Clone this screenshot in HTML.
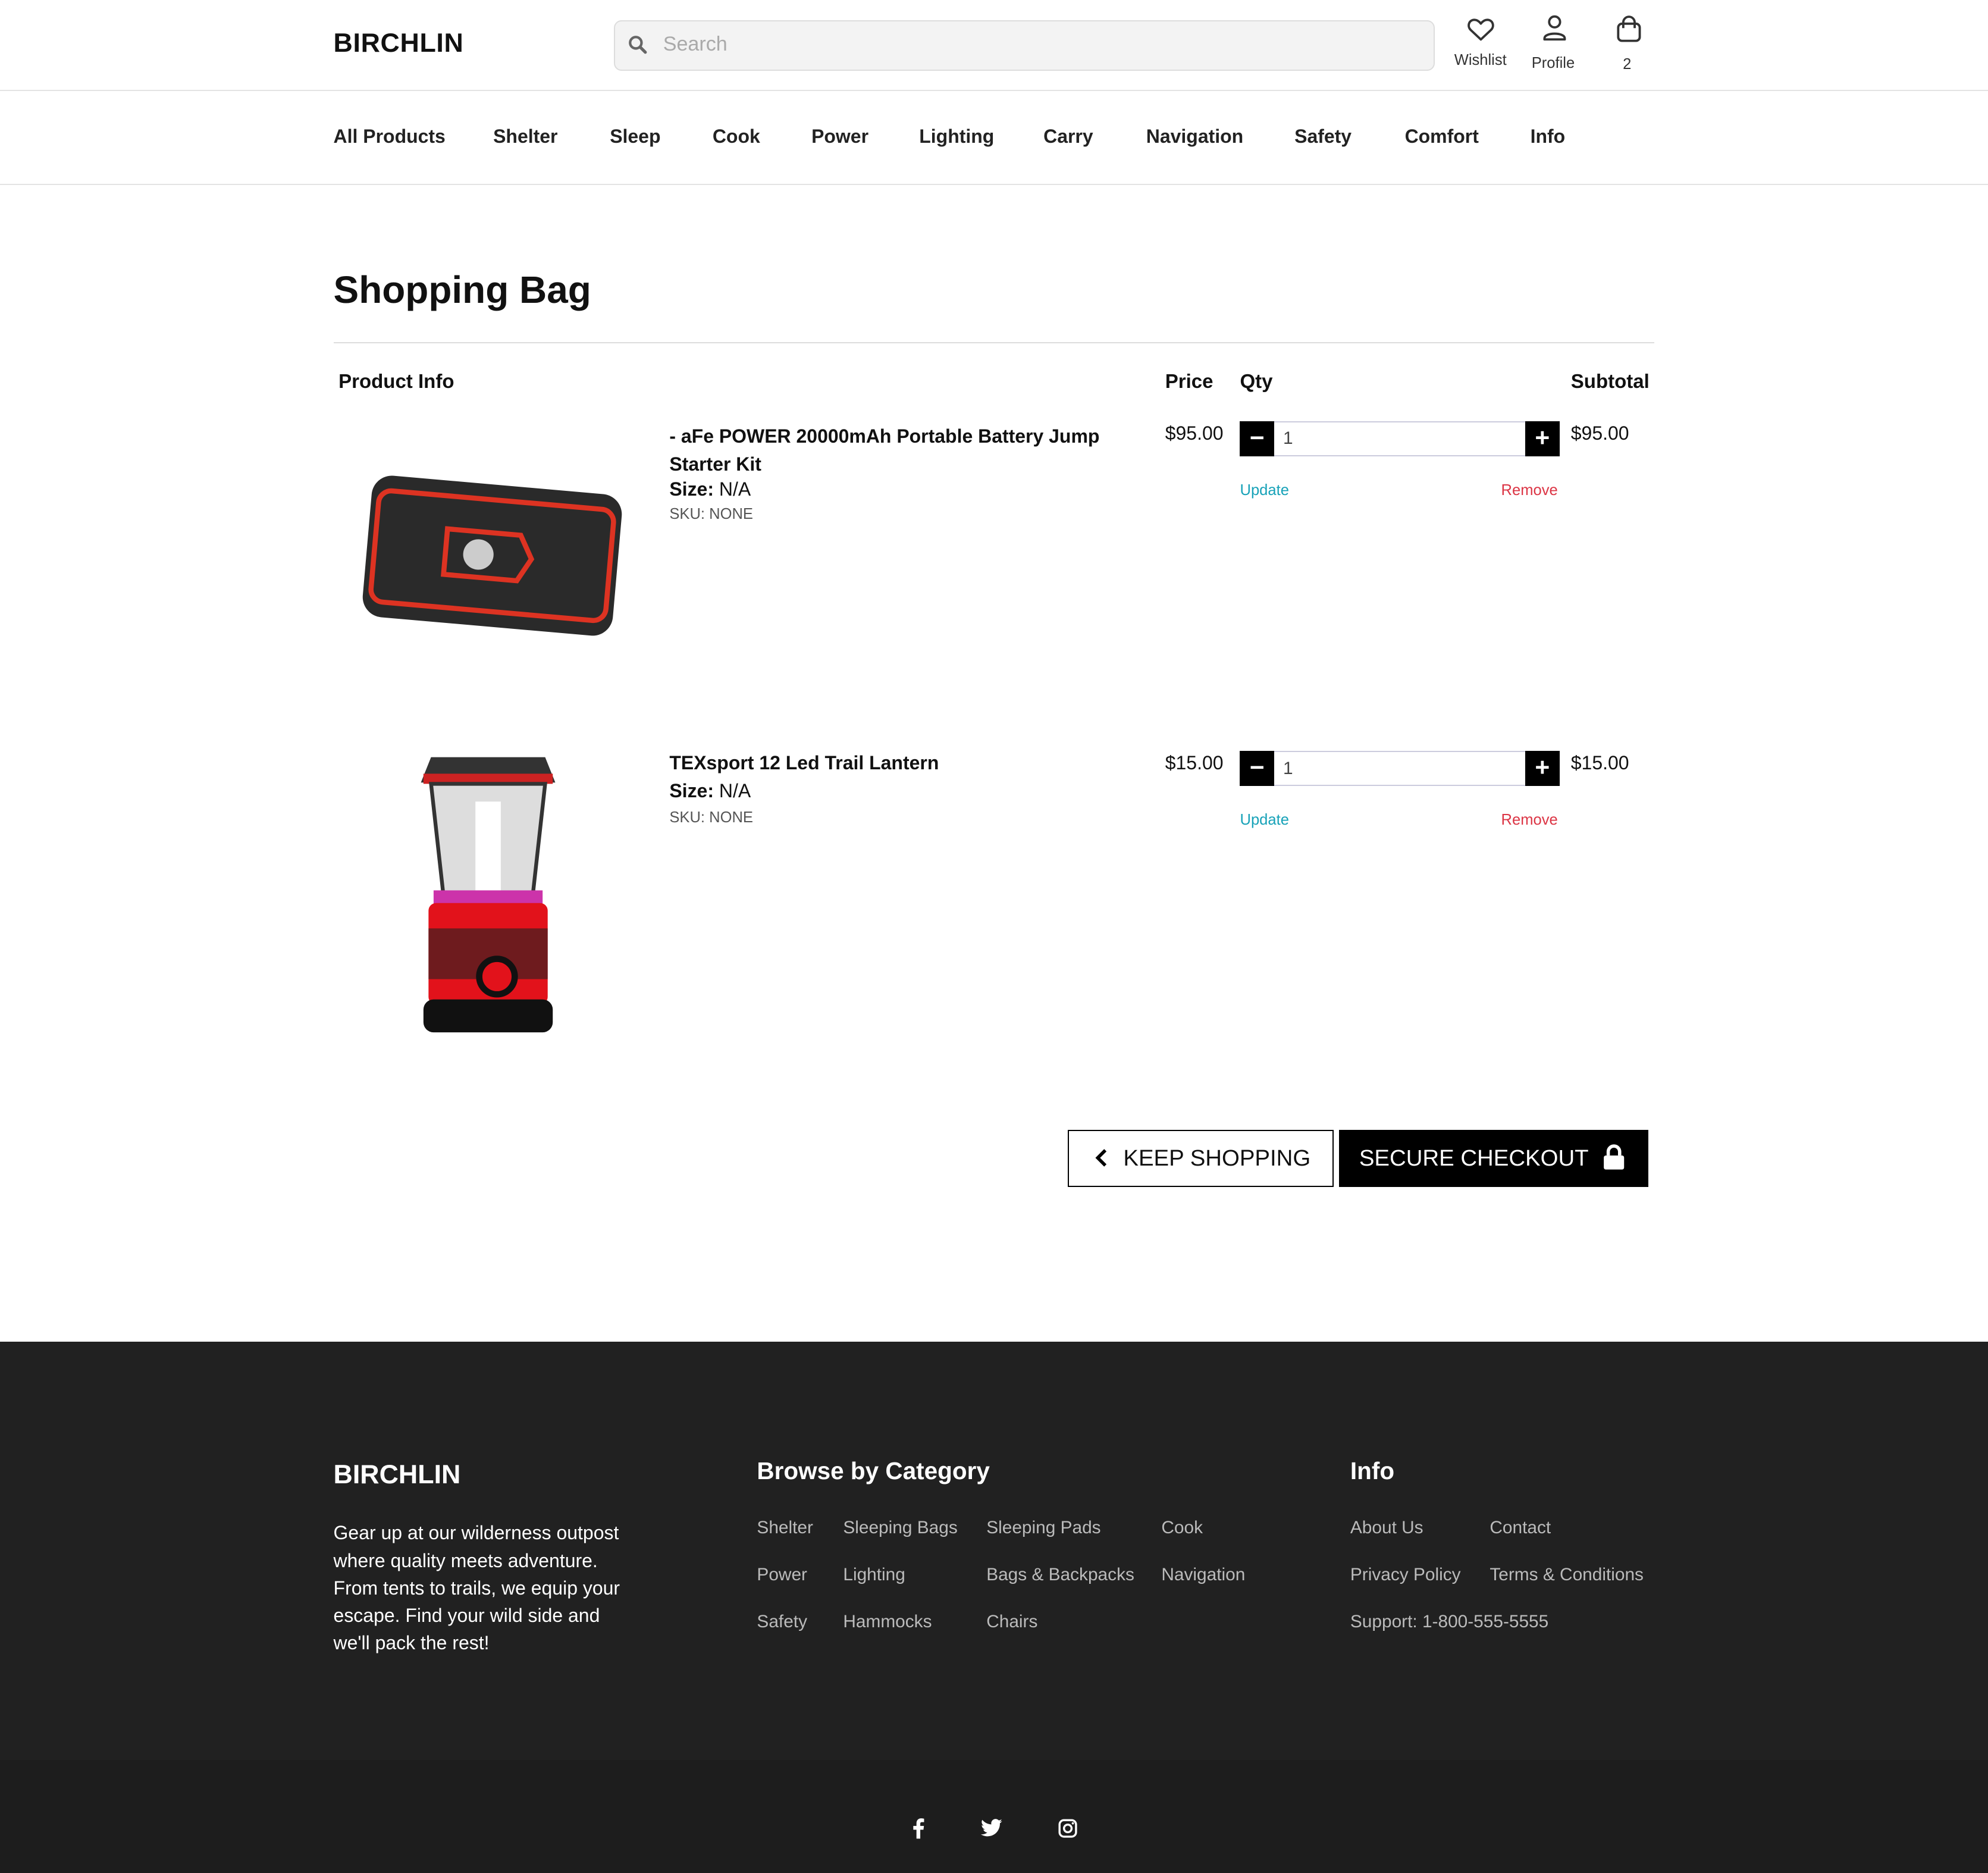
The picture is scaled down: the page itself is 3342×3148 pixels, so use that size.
<!DOCTYPE html>
<html><head><meta charset="utf-8"><style>
html,body{margin:0;padding:0;background:#fff}
body{width:1568px;height:1477px;zoom:2.13138;position:relative;overflow:hidden;font-family:"Liberation Sans",Arial,sans-serif;color:#111}
.a{position:absolute;white-space:nowrap}
.nav span{position:absolute;top:99px;font-size:15px;font-weight:bold;color:#222}
.ft{color:#bbb;font-size:14px}
.qb{position:absolute;width:27px;height:28px;background:#000;color:#fff;font-weight:bold;font-size:20px;text-align:center;line-height:27px}
</style></head><body>
<div class="a" style="left:263px;top:22px;font-size:21px;font-weight:bold;letter-spacing:.3px">BIRCHLIN</div>
<div class="a" style="left:484px;top:16px;width:646px;height:38px;background:#f3f3f3;border:1px solid #ddd;border-radius:6px"></div>
<svg class="a" style="left:495px;top:27px" width="16" height="16" viewBox="0 0 16 16"><circle cx="6.5" cy="6.5" r="4.5" fill="none" stroke="#666" stroke-width="2"/><path d="M10 10l4 4" stroke="#666" stroke-width="2.4" stroke-linecap="round"/></svg>
<div class="a" style="left:523px;top:26px;font-size:16px;color:#aaa">Search</div>
<svg class="a" style="left:1157px;top:13px" width="22" height="20" viewBox="0 0 22 20"><path d="M11 18L3 10.5C0 7.5 1.5 2.5 6 2.5c2.2 0 3.7 1.3 5 3 1.3-1.7 2.8-3 5-3 4.5 0 6 5 3 8z" fill="none" stroke="#333" stroke-width="1.8" stroke-linejoin="round"/></svg>
<div class="a" style="left:1147px;top:41px;font-size:12px;color:#333">Wishlist</div>
<svg class="a" style="left:1215px;top:11px" width="22" height="22" viewBox="0 0 22 22"><circle cx="11" cy="6.5" r="4.3" fill="none" stroke="#333" stroke-width="1.8"/><path d="M3 19.5c0-5 16-5 16 0v0.8H3z" fill="none" stroke="#333" stroke-width="1.8" stroke-linejoin="round"/></svg>
<div class="a" style="left:1208px;top:43px;font-size:12px;color:#333">Profile</div>
<svg class="a" style="left:1274px;top:12px" width="22" height="22" viewBox="0 0 22 22"><rect x="2.5" y="6.5" width="17" height="13.5" rx="3" fill="none" stroke="#333" stroke-width="1.8"/><path d="M6.5 10V5.5a4.5 4.5 0 0 1 9 0V10" fill="none" stroke="#333" stroke-width="1.8"/></svg>
<div class="a" style="left:1280px;top:44px;font-size:12px;color:#333">2</div>
<div class="a" style="left:0;top:71px;width:1568px;border-top:1px solid #e3e3e3"></div>
<div class="nav">
<span style="left:263px">All Products</span><span style="left:389px">Shelter</span><span style="left:481px">Sleep</span><span style="left:562px">Cook</span><span style="left:640px">Power</span><span style="left:725px">Lighting</span><span style="left:823px">Carry</span><span style="left:904px">Navigation</span><span style="left:1021px">Safety</span><span style="left:1108px">Comfort</span><span style="left:1207px">Info</span>
</div>
<div class="a" style="left:0;top:145px;width:1568px;border-top:1px solid #e3e3e3"></div>
<div class="a" style="left:263px;top:211px;font-size:30px;font-weight:bold">Shopping Bag</div>
<div class="a" style="left:263px;top:270px;width:1042px;border-top:1px solid #ddd"></div>
<div class="a" style="left:267px;top:292px;font-size:15.5px;font-weight:bold">Product Info</div>
<div class="a" style="left:919px;top:292px;font-size:15.5px;font-weight:bold">Price</div>
<div class="a" style="left:978px;top:292px;font-size:15.5px;font-weight:bold">Qty</div>
<div class="a" style="left:1239px;top:292px;font-size:15.5px;font-weight:bold">Subtotal</div>

<!-- item 1 -->
<svg class="a" style="left:283px;top:370px" width="210" height="145" viewBox="0 0 210 145"><g transform="rotate(5 105 72)"><rect x="6" y="12" width="198" height="112" rx="16" fill="#2a2a2a"/><rect x="12" y="24" width="186" height="88" rx="10" fill="none" stroke="#d32" stroke-width="4"/><path d="M68 50h58l10 18-10 18H68z" fill="none" stroke="#d32" stroke-width="4"/><circle cx="94" cy="68" r="12" fill="#ccc"/></g></svg>
<div class="a" style="left:528px;top:333px;font-size:15px;font-weight:bold;line-height:22px;white-space:normal;width:360px">- aFe POWER 20000mAh Portable Battery Jump Starter Kit</div>
<div class="a" style="left:528px;top:377px;font-size:15px"><b>Size:</b> N/A</div>
<div class="a" style="left:528px;top:399px;font-size:12px;color:#555">SKU: NONE</div>
<div class="a" style="left:919px;top:333px;font-size:15px">$95.00</div>
<div class="a" style="left:978px;top:332px;width:250px;height:26px;border:1px solid #ccd"></div>
<div class="qb" style="left:978px;top:332px">−</div><div class="qb" style="left:1203px;top:332px">+</div>
<div class="a" style="left:1012px;top:338px;font-size:14px;color:#444">1</div>
<div class="a" style="left:1239px;top:333px;font-size:15px">$95.00</div>
<div class="a" style="left:978px;top:380px;font-size:12px;color:#17a2b8">Update</div>
<div class="a" style="left:1184px;top:380px;font-size:12px;color:#dc3545">Remove</div>

<!-- item 2 -->
<svg class="a" style="left:320px;top:592px" width="130" height="230" viewBox="0 0 130 230"><path d="M20 5h90l8 20H12z" fill="#333"/><rect x="14" y="18" width="102" height="8" fill="#c22"/><path d="M20 26h90l-10 90H30z" fill="#ddd" stroke="#333" stroke-width="3"/><rect x="55" y="40" width="20" height="70" fill="#fff"/><rect x="22" y="110" width="86" height="16" fill="#c3a" /><rect x="18" y="120" width="94" height="80" rx="6" fill="#e2121b"/><rect x="18" y="140" width="94" height="40" fill="#222" opacity=".6"/><circle cx="72" cy="178" r="14" fill="#e2121b" stroke="#111" stroke-width="5"/><rect x="14" y="196" width="102" height="26" rx="8" fill="#111"/></svg>
<div class="a" style="left:528px;top:593px;font-size:15px;font-weight:bold">TEXsport 12 Led Trail Lantern</div>
<div class="a" style="left:528px;top:615px;font-size:15px"><b>Size:</b> N/A</div>
<div class="a" style="left:528px;top:638px;font-size:12px;color:#555">SKU: NONE</div>
<div class="a" style="left:919px;top:593px;font-size:15px">$15.00</div>
<div class="a" style="left:978px;top:592px;width:250px;height:26px;border:1px solid #ccd"></div>
<div class="qb" style="left:978px;top:592px">−</div><div class="qb" style="left:1203px;top:592px">+</div>
<div class="a" style="left:1012px;top:598px;font-size:14px;color:#444">1</div>
<div class="a" style="left:1239px;top:593px;font-size:15px">$15.00</div>
<div class="a" style="left:978px;top:640px;font-size:12px;color:#17a2b8">Update</div>
<div class="a" style="left:1184px;top:640px;font-size:12px;color:#dc3545">Remove</div>

<div class="a" style="left:842px;top:891px;width:208px;height:43px;border:1px solid #000"></div>
<svg class="a" style="left:863px;top:905px" width="12" height="16" viewBox="0 0 12 16"><path d="M9 2L3 8l6 6" fill="none" stroke="#000" stroke-width="2.6"/></svg>
<div class="a" style="left:886px;top:903px;font-size:18px">KEEP SHOPPING</div>
<div class="a" style="left:1056px;top:891px;width:244px;height:45px;background:#000"></div>
<div class="a" style="left:1072px;top:903px;font-size:18px;color:#fff">SECURE CHECKOUT</div>
<svg class="a" style="left:1264px;top:902px" width="18" height="21" viewBox="0 0 18 21"><path d="M4.5 9V6a4.5 4.5 0 0 1 9 0v3" fill="none" stroke="#fff" stroke-width="2.6"/><rect x="1" y="9" width="16" height="11" rx="1.5" fill="#fff"/></svg>

<!-- footer -->
<div class="a" style="left:0;top:1058px;width:1568px;height:330px;background:#212121"></div>
<div class="a" style="left:0;top:1388px;width:1568px;height:89px;background:#1d1d1d"></div>
<div class="a" style="left:263px;top:1151px;font-size:21px;font-weight:bold;color:#fff">BIRCHLIN</div>
<div class="a" style="left:263px;top:1198px;font-size:15px;line-height:21.7px;color:#fff;white-space:normal;width:236px">Gear up at our wilderness outpost where quality meets adventure. From tents to trails, we equip your escape. Find your wild side and we'll pack the rest!</div>
<div class="a" style="left:597px;top:1149px;font-size:19px;font-weight:bold;color:#fff">Browse by Category</div>
<div class="a ft" style="left:597px;top:1197px">Shelter</div><div class="a ft" style="left:665px;top:1197px">Sleeping Bags</div><div class="a ft" style="left:778px;top:1197px">Sleeping Pads</div><div class="a ft" style="left:916px;top:1197px">Cook</div>
<div class="a ft" style="left:597px;top:1234px">Power</div><div class="a ft" style="left:665px;top:1234px">Lighting</div><div class="a ft" style="left:778px;top:1234px">Bags &amp; Backpacks</div><div class="a ft" style="left:916px;top:1234px">Navigation</div>
<div class="a ft" style="left:597px;top:1271px">Safety</div><div class="a ft" style="left:665px;top:1271px">Hammocks</div><div class="a ft" style="left:778px;top:1271px">Chairs</div>
<div class="a" style="left:1065px;top:1149px;font-size:19px;font-weight:bold;color:#fff">Info</div>
<div class="a ft" style="left:1065px;top:1197px">About Us</div><div class="a ft" style="left:1175px;top:1197px">Contact</div>
<div class="a ft" style="left:1065px;top:1234px">Privacy Policy</div><div class="a ft" style="left:1175px;top:1234px">Terms &amp; Conditions</div>
<div class="a ft" style="left:1065px;top:1271px">Support: 1-800-555-5555</div>
<svg class="a" style="left:718px;top:1433px" width="12" height="18" viewBox="0 0 12 18"><path d="M8 17V10h2.5l.4-3H8V5.3c0-.8.3-1.3 1.4-1.3H11V1.3C10.6 1.2 9.8 1 8.8 1 6.6 1 5 2.4 5 4.9V7H2.5v3H5v7z" fill="#fff"/></svg>
<svg class="a" style="left:773px;top:1434px" width="18" height="16" viewBox="0 0 24 20"><path d="M23 2.3c-.8.4-1.7.6-2.6.7.9-.6 1.6-1.4 2-2.5-.9.5-1.900.9-2.9 1.1A4.6 4.6 0 0 0 11.6 5.8 13 13 0 0 1 2.1 1a4.6 4.6 0 0 0 1.4 6.1c-.7 0-1.4-.2-2-.6 0 2.2 1.6 4.1 3.7 4.5-.7.2-1.4.2-2.1.1.6 1.8 2.3 3.2 4.3 3.2A9.2 9.2 0 0 1 .5 16.2 13 13 0 0 0 7.5 18.300c8.5 0 13.1-7 13.1-13.1v-.6c.9-.6 1.7-1.4 2.4-2.3z" fill="#fff"/></svg>
<svg class="a" style="left:834px;top:1434px" width="16" height="16" viewBox="0 0 16 16"><rect x="1.5" y="1.5" width="13" height="13" rx="3.5" fill="none" stroke="#fff" stroke-width="1.6"/><circle cx="8" cy="8" r="3" fill="none" stroke="#fff" stroke-width="1.6"/><circle cx="12" cy="4" r=".9" fill="#fff"/></svg>
</body></html>
